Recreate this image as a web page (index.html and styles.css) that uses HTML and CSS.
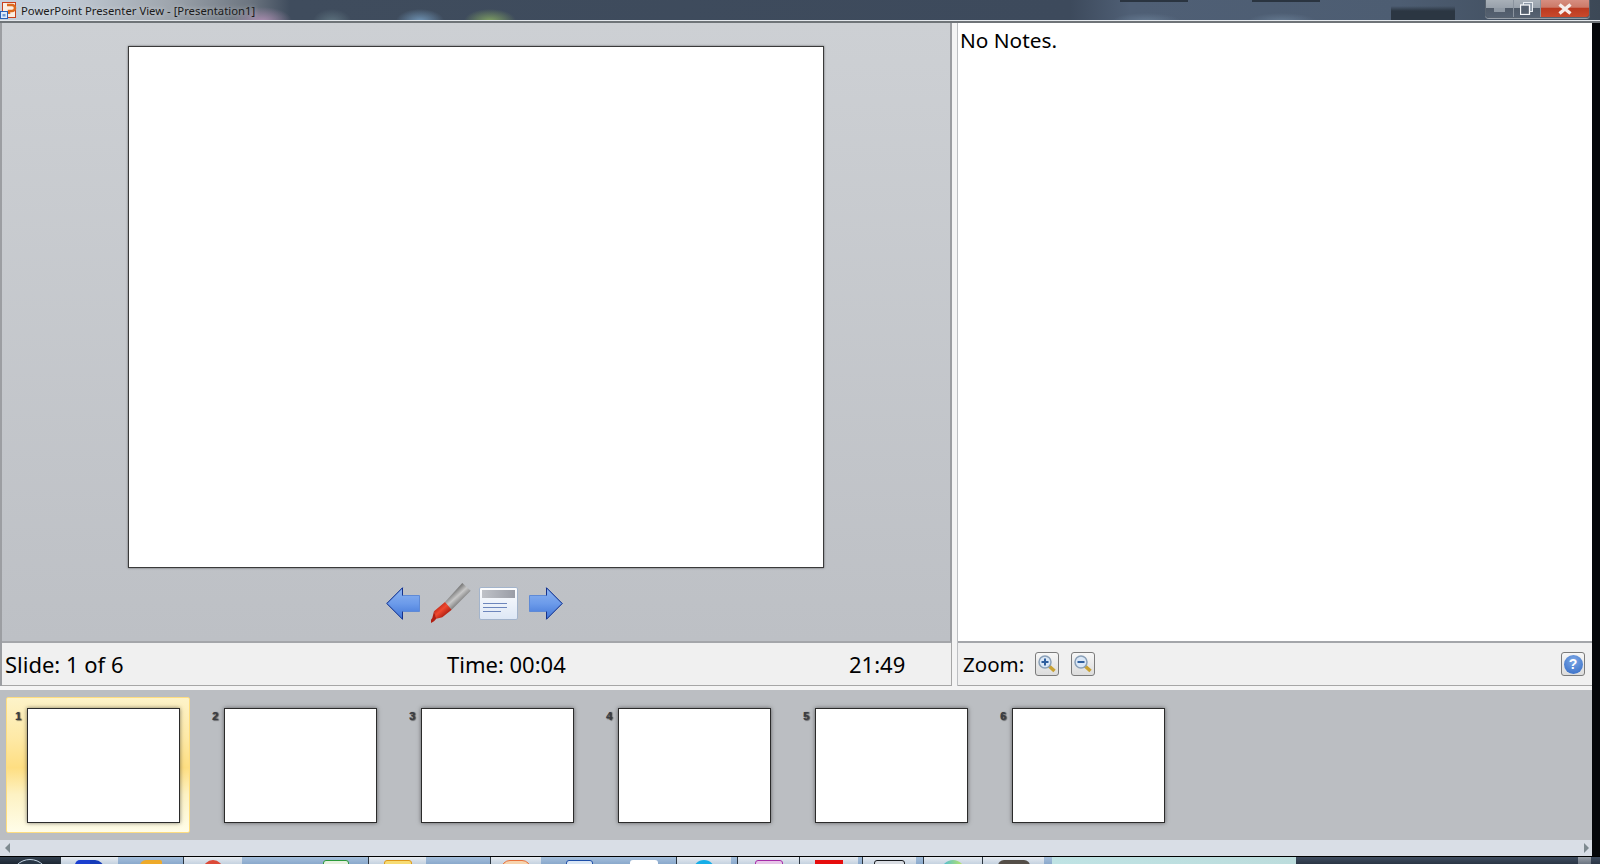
FILE: index.html
```html
<!DOCTYPE html>
<html lang="en">
<head>
<meta charset="utf-8">
<title>PowerPoint Presenter View</title>
<link rel="stylesheet" href="styles.css">
</head>
<body>
<header class="titlebar">
  <svg class="app-icon" width="17" height="20" viewBox="0 0 17 20"><rect x="2.500" y="1.500" width="13" height="15" fill="#fbeee2" stroke="#c8401c"/><path d="M7 4h5a2.500 2.500 0 0 1 0 6H9v3" fill="none" stroke="#dd6a1e" stroke-width="2.500"/><rect x="0.500" y="10.500" width="7" height="7" fill="#dfeaf8" stroke="#2a62b8"/><rect x="2.500" y="13" width="3" height="2.500" fill="#6f9bd8"/></svg>
  <span class="title-text">PowerPoint Presenter View - [Presentation1]</span>
  <div class="controls">
    <span class="ctl ctl-min"><i class="min-glyph"></i></span>
    <span class="ctl ctl-max"><svg width="13" height="13" viewBox="0 0 13 13"><rect x="3.500" y="0.500" width="9" height="9" fill="#8c98a6" stroke="#e8ecf0"/><rect x="0.500" y="3" width="9" height="9.500" fill="#55606e" stroke="#f4f6f8" stroke-width="1.300"/></svg></span>
    <span class="ctl ctl-close"><svg width="16" height="12" viewBox="0 0 16 12"><path d="M2.500 1.500 13.500 10.500M13.500 1.500 2.500 10.500" stroke="#f6ecea" stroke-width="3.400" fill="none"/></svg></span>
  </div>
</header>

<main class="client">
  <section class="upper">
    <div class="pane-left">
      <div class="stage">
        <div class="slide"></div>
        <div class="tools">
          <svg class="tool-arrow" width="34" height="33" viewBox="0 0 34 33"><defs><linearGradient id="ag" x1="0" y1="0" x2="0" y2="1"><stop offset="0" stop-color="#8fb4ef"/><stop offset="0.500" stop-color="#6c9bea"/><stop offset="1" stop-color="#3f73d6"/></linearGradient></defs><path d="M0.800 16.500 16.500 0.800V8.500H33.500V24.500H16.500V32.200Z" fill="url(#ag)" stroke="#5f8ad6"/><path d="M16.500 8.500V0.800L0.800 16.500 16.500 32.200V24.500" fill="none" stroke="#15318c"/></svg>
          <svg class="tool-pen" width="40" height="41" viewBox="0 0 40 41"><defs><linearGradient id="pg" gradientUnits="userSpaceOnUse" x1="22" y1="8" x2="31" y2="18"><stop offset="0" stop-color="#6f6f6f"/><stop offset="0.500" stop-color="#c8c8c8"/><stop offset="1" stop-color="#7d7d7d"/></linearGradient><linearGradient id="pr" gradientUnits="userSpaceOnUse" x1="7" y1="22" x2="16" y2="32"><stop offset="0" stop-color="#b92414"/><stop offset="0.450" stop-color="#f0492f"/><stop offset="1" stop-color="#a91c10"/></linearGradient></defs><path d="M31.300 0 39.700 7.700 20.700 26.700 14 19Z" fill="url(#pg)"/><path d="M14 19 20.700 26.700 11.300 34.300 5.300 35.700C4 33 3.500 30.500 3 28.300Z" fill="url(#pr)"/><path d="M3 28.300 5.300 35.700 3 38.300 0 40 0 36.700 1.300 35Z" fill="#b11f12"/></svg>
          <svg class="tool-notes" width="39" height="33" viewBox="0 0 39 33"><defs><linearGradient id="ng" x1="0" y1="0" x2="0" y2="1"><stop offset="0" stop-color="#fdfdfe"/><stop offset="1" stop-color="#dde7f5"/></linearGradient><linearGradient id="nh" x1="0" y1="0" x2="1" y2="0"><stop offset="0" stop-color="#bfc2c8"/><stop offset="1" stop-color="#9a9da6"/></linearGradient></defs><rect x="0.500" y="0.500" width="38" height="32" rx="1.500" fill="url(#ng)" stroke="#a3b4cb"/><rect x="3" y="3" width="33" height="8" fill="url(#nh)"/><path d="M4 16.500H28M4 20.500H28M4 24.500H22" stroke="#6d86bc"/></svg>
          <svg class="tool-arrow" width="34" height="33" viewBox="0 0 34 33"><path d="M33.200 16.500 17.500 0.800V8.500H0.500V24.500H17.500V32.200Z" fill="url(#ag)" stroke="#5f8ad6"/><path d="M17.500 8.500V0.800L33.200 16.500 17.500 32.200V24.500" fill="none" stroke="#15318c"/></svg>
        </div>
      </div>
      <div class="status status-left">
        <span>Slide: 1 of 6</span>
        <span>Time: 00:04</span>
        <span>21:49</span>
      </div>
    </div>
    <div class="pane-right">
      <div class="notes">No Notes.</div>
      <div class="status status-right">
        <span class="zoom-label">Zoom:</span>
        <button class="sq-btn" type="button"><svg width="20" height="20" viewBox="0 0 20 20"><path d="M12 12 17.500 17" stroke="#c9a234" stroke-width="3.500"/><circle cx="8" cy="8" r="6" fill="#dbe8f7" stroke="#8aa0b8" stroke-width="1.500"/><path d="M4.500 8H11.500M8 4.500V11.500" stroke="#2f5f9e" stroke-width="2"/></svg></button>
        <button class="sq-btn" type="button"><svg width="20" height="20" viewBox="0 0 20 20"><path d="M12 12 17.500 17" stroke="#c9a234" stroke-width="3.500"/><circle cx="8" cy="8" r="6" fill="#dbe8f7" stroke="#8aa0b8" stroke-width="1.500"/><path d="M4.500 8H11.500" stroke="#2f5f9e" stroke-width="2"/></svg></button>
        <button class="sq-btn help-btn" type="button"><span class="help-disc">?</span></button>
      </div>
    </div>
  </section>

  <section class="thumbs">
    <div class="thumb thumb-on"><span class="num">1</span><div class="mini"></div></div>
    <div class="thumb"><span class="num">2</span><div class="mini"></div></div>
    <div class="thumb"><span class="num">3</span><div class="mini"></div></div>
    <div class="thumb"><span class="num">4</span><div class="mini"></div></div>
    <div class="thumb"><span class="num">5</span><div class="mini"></div></div>
    <div class="thumb"><span class="num">6</span><div class="mini"></div></div>
  </section>

  <div class="hscroll"><i class="arr arr-l"></i><i class="arr arr-r"></i></div>
</main>

<footer class="taskbar">
  <span class="tb tb-dark"><i class="ic orb"></i></span>
  <span class="tb tb-light"><i class="ic ic-blue"></i></span>
  <span class="tb tb-glass"><i class="ic ic-folder"></i></span>
  <span class="tb tb-light"><i class="ic ic-chrome"></i></span>
  <span class="tb tb-glass"></span>
  <span class="tb tb-glass"><i class="ic ic-green"></i></span>
  <span class="tb tb-glass"></span>
  <span class="tb tb-light"><i class="ic ic-yellow"></i></span>
  <span class="tb tb-glass"></span>
  <span class="tb tb-light"><i class="ic ic-orange"></i></span>
  <span class="tb tb-glass"></span>
  <span class="tb tb-glass"><i class="ic ic-outline-blue"></i></span>
  <span class="tb tb-glass"><i class="ic ic-white"></i></span>
  <span class="tb tb-light"><i class="ic ic-cyan"></i></span>
  <span class="tb tb-glass"></span>
  <span class="tb tb-light"><i class="ic ic-magenta"></i></span>
  <span class="tb tb-light"><i class="ic ic-red"></i></span>
  <span class="tb tb-glass"></span>
  <span class="tb tb-light"><i class="ic ic-black"></i></span>
  <span class="tb tb-glass"></span>
  <span class="tb tb-light"><i class="ic ic-color"></i></span>
  <span class="tb tb-light"><i class="ic ic-dark"></i></span>
  <span class="tb tb-glass"></span>
  <span class="tb tb-teal"></span>
  <span class="tb tb-tray"></span>
  <span class="tb tb-show"></span>
  <span class="tb tb-tray"></span>
</footer>
</body>
</html>
```
FILE: styles.css
```css
* { box-sizing: border-box; }
html, body { margin: 0; height: 100%; }
body {
  width: 1600px;
  height: 864px;
  overflow: hidden;
  background: #05070a;
  display: flex;
  flex-direction: column;
  font-family: "Noto Sans", "Open Sans", sans-serif;
  color: #000;
}

/* title bar */
.titlebar {
  height: 23px;
  flex: none;
  display: flex;
  align-items: flex-start;
  border-bottom: 2px solid #6f7478;
  box-shadow: inset 0 -1px 0 #e4e8ec;
  background:
    radial-gradient(ellipse 26px 12px at 490px 21px, #7f9f62, transparent),
    radial-gradient(ellipse 24px 12px at 420px 21px, #6f93b4, transparent),
    radial-gradient(ellipse 20px 14px at 332px 23px, #5f7480, transparent),
    radial-gradient(ellipse 30px 14px at 262px 21px, #a88cae, transparent),
    radial-gradient(ellipse 34px 8px at 1146px 21px, #64788f, transparent),
    radial-gradient(ellipse 34px 8px at 1282px 21px, #64788f, transparent),
    linear-gradient(#2a3440, #2a3440) 1120px 0 / 68px 2px no-repeat,
    linear-gradient(#2a3440, #2a3440) 1252px 0 / 68px 2px no-repeat,
    linear-gradient(transparent, #2b3642 5px) 1391px 6px / 64px 15px no-repeat,
    linear-gradient(90deg, #c6d0dc 0, #c3ccd6 60px, #9ea5ad 170px, #6c7580 250px, #3f4c5d 290px, #3d4a5c 1070px, #4f5f75 1130px, #4d5d72 1400px, #3c4856 1600px);
}
.app-icon { flex: none; margin: 1px 4px 0 0; }
.title-text {
  font-size: 11.300px;
  line-height: 21px;
  color: #1a1a1a;
  white-space: nowrap;
  text-shadow: 0 0 5px rgba(255,255,255,.55);
}
.controls {
  margin-left: auto;
  margin-right: 10px;
  display: flex;
  height: 18px;
  border: 1px solid #59636f;
  border-top: 0;
  border-radius: 0 0 4px 4px;
  overflow: hidden;
  box-shadow: 0 1px 0 rgba(255,255,255,.45);
}
.ctl { display: flex; align-items: center; justify-content: center; height: 100%; }
.ctl-min, .ctl-max {
  width: 27.500px;
  background: linear-gradient(#a8b0b8 0, #98a1ab 45%, #4f5a68 50%, #566272 100%);
  border-right: 1px solid #8a939e;
}
.min-glyph { display: block; width: 11px; height: 4px; margin-top: 2px; background: #8e98a3; }
.ctl-close {
  width: 48px;
  background: linear-gradient(#d68e80 0, #cc7a68 42%, #bb3a20 50%, #c9492c 100%);
}

/* client area */
.client {
  flex: 1;
  min-height: 0;
  margin-right: 8px;
  display: flex;
  flex-direction: column;
  background: #f4f4f4;
}
.upper { flex: none; height: 663px; display: flex; gap: 5px; }
.pane-left { width: 952px; display: flex; flex-direction: column; border-left: 2px solid #9c9ea2; }
.pane-right { flex: 1; min-width: 0; display: flex; flex-direction: column; border-left: 1px solid #bdbfc2; }

.stage {
  height: 620px;
  flex: none;
  display: flex;
  flex-direction: column;
  align-items: center;
  padding-top: 23px;
  background: linear-gradient(#cdd0d4, #bdc0c5);
  border-right: 2px solid #9b9da1;
  border-bottom: 2px solid #a4a6aa;
}
.slide {
  width: 696px;
  height: 522px;
  flex: none;
  background: #fff;
  border: 1px solid #3a3a3a;
  box-shadow: 0 0 2px rgba(0,0,0,.5);
}
.tools { display: flex; align-items: center; gap: 11px; margin: 15px 3px 0 0; }
.tool-arrow, .tool-pen, .tool-notes { display: block; flex: none; }
.tools .tool-notes { margin-left: -3px; }

.status {
  flex: 1;
  display: flex;
  align-items: center;
  background: #f0f0f0;
  border-bottom: 1px solid #a6a6a6;
  font-size: 22px;
  line-height: 28px;
}
.status-left {
  display: grid;
  grid-template-columns: 442px 402px auto;
  padding-left: 3px;
  border-right: 1px solid #a6a6a6;
}
.notes {
  height: 620px;
  flex: none;
  background: #fff;
  border-bottom: 2px solid #a4a6aa;
  padding: 2px 0 0 2px;
  font-size: 20.800px;
  line-height: 30px;
}
.status-right { padding: 0 7px 0 5px; gap: 12px; }
.zoom-label { flex: none; width: 60px; font-size: 20.500px; }
.sq-btn {
  width: 24px;
  height: 24px;
  flex: none;
  padding: 0;
  display: flex;
  align-items: center;
  justify-content: center;
  background: linear-gradient(#f7f7f7, #dcdcdc);
  border: 1px solid #7b7b7b;
  border-radius: 3px;
}
.help-btn { margin-left: auto; }
.help-disc {
  width: 19px;
  height: 19px;
  border-radius: 50%;
  background: radial-gradient(circle at 50% 30%, #7fa9e6, #2f68c4);
  color: #fff;
  font: bold 14px/19px "Liberation Sans", sans-serif;
  text-align: center;
}

/* thumbnails */
.thumbs {
  height: 154px;
  flex: none;
  display: flex;
  gap: 13px;
  padding: 7px 0 0 6px;
  background: #bbbec2;
  border-top: 4px solid #f4f4f4;
}
.thumb {
  width: 184px;
  height: 136px;
  flex: none;
  display: flex;
  align-items: flex-start;
  padding: 10px 9px 9px 8px;
  border: 1px solid transparent;
  border-radius: 2px;
}
.thumb-on {
  border-color: #fedd80;
  background: linear-gradient(#fdf3c9 0, #fee9a6 30%, #fede82 52%, #fdf2c3 72%, #fffde9 100%);
}
.num {
  width: 12px;
  flex: none;
  padding-top: 2px;
  font: bold 11px/12px "Liberation Sans", sans-serif;
  color: #3a3d42;
  text-shadow: 1px 0 1px rgba(0,0,0,.55), 1px 1px 1px rgba(0,0,0,.4);
}
.mini {
  width: 153px;
  height: 115px;
  flex: none;
  background: #fff;
  border: 1px solid #2b2b2b;
  box-shadow: 0 0 4px rgba(0,0,0,.5);
}

.hscroll {
  flex: 1;
  display: flex;
  justify-content: space-between;
  align-items: center;
  padding: 0 3px 0 5px;
  background: #d9dee6;
}
.arr { width: 0; height: 0; border-top: 5px solid transparent; border-bottom: 5px solid transparent; }
.arr-l { border-right: 5px solid #7e8a90; }
.arr-r { border-left: 5px solid #7e8a90; }

/* taskbar */
.taskbar {
  height: 8px;
  flex: none;
  display: grid;
  grid-template-columns:
    60px 58px 65px 59px 65px 57px 4px 58px 64px 51px 6px 64px 65px 55px 6px 62px 59px 4px 54px 7px 59px 62px 8px 244px 282px 13px 9px;
  background: #0a0d12;
  border-top: 1px solid #000;
  overflow: hidden;
}
.tb { display: flex; justify-content: center; align-items: flex-start; padding-top: 3px; overflow: hidden; }
.tb-dark { background: linear-gradient(#33404f, #1d2733); }
.tb-light { background: linear-gradient(#e6ebf1, #c5d2e0); border-left: 1px solid #2b3540; }
.tb-glass { background: linear-gradient(#a5bfdc, #8aa9cc); }
.tb-teal { background: linear-gradient(90deg, #bfe3e4, #bcdcdc); }
.tb-tray { background: linear-gradient(#3f4d60, #2a3544); }
.tb-show { background: linear-gradient(#9ba2ab, #6a7380); }

.ic { display: block; flex: none; height: 12px; border-radius: 3px 3px 0 0; }
.orb { width: 38px; height: 38px; border-radius: 50%; background: #283646; border: 1px solid #c3d4e4; margin-top: -1px; }
.ic-blue { width: 29px; background: linear-gradient(90deg, #1b3fd0 50%, #153bb8 50%); border-radius: 5px 9px 0 0; }
.ic-folder { width: 22px; background: #eeaa2a; border-radius: 6px 2px 0 0; }
.ic-chrome { width: 20px; background: #dc4a38; border-radius: 10px 10px 0 0; }
.ic-green { width: 26px; background: #e6f0e0; border: 1px solid #2b9a3a; }
.ic-yellow { width: 28px; background: #f7dc74; border: 1px solid #dd9818; }
.ic-orange { width: 30px; background: #f6d4ae; border: 1px solid #e8703a; border-radius: 9px 9px 0 0; }
.ic-outline-blue { width: 27px; background: #d9e6f4; border: 1px solid #1c4da8; }
.ic-white { width: 28px; background: #fff; }
.ic-cyan { width: 22px; background: #16aee8; border-radius: 11px 11px 0 0; }
.ic-magenta { width: 28px; background: #e6c6e8; border: 1px solid #a62aa8; }
.ic-red { width: 28px; background: #e60d0d; border-radius: 0; }
.ic-black { width: 31px; background: #d8dce2; border: 1px solid #15181c; }
.ic-color { width: 24px; background: linear-gradient(90deg, #45b8e0, #c6e95a); border-radius: 12px 12px 0 0; }
.ic-dark { width: 32px; background: #544e48; border-radius: 6px 6px 0 0; }
```
